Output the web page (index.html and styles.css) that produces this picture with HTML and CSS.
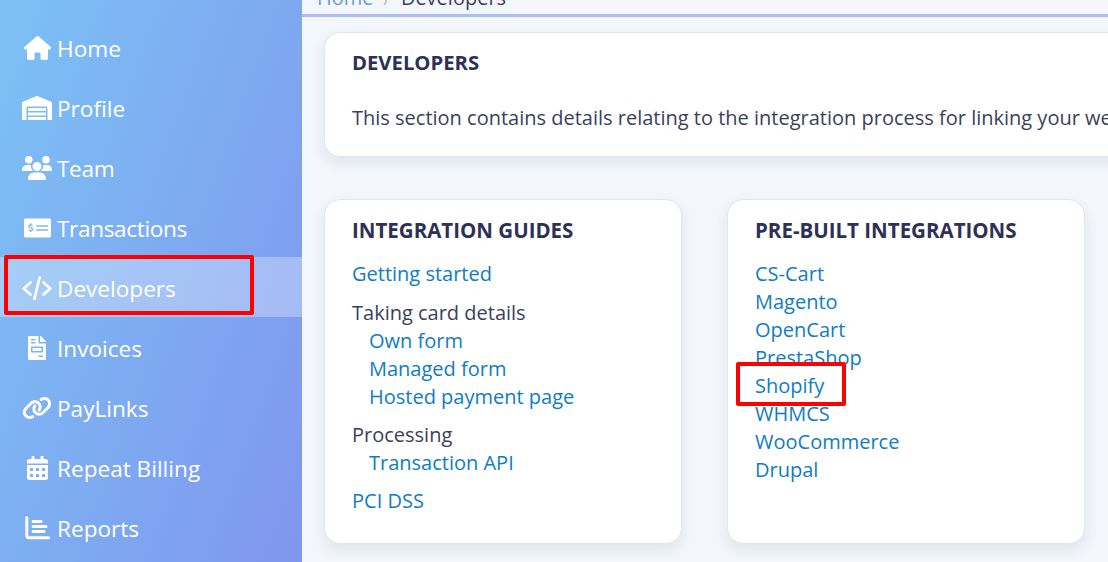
FILE: index.html
```html
<!DOCTYPE html>
<html lang="en">
<head>
<meta charset="utf-8">
<title>Developers</title>
<link rel="stylesheet" href="styles.css">
</head>
<body>
<div class="app">
  <nav class="sidebar">
    <a class="nav-item"><span class="nav-icon"><svg viewBox="0 0 576 512" class="i27"><path d="M575.8 255.5c0 18-15 32.1-32 32.1h-32l.7 160.2c0 2.7-.2 5.4-.5 8.1V472c0 22.1-17.9 40-40 40H456c-1.1 0-2.2 0-3.3-.1c-1.4 .1-2.8 .1-4.2 .1H416 392c-22.1 0-40-17.9-40-40V448 384c0-17.7-14.3-32-32-32H256c-17.7 0-32 14.3-32 32v64 24c0 22.1-17.9 40-40 40H160 128.1c-1.5 0-3-.1-4.5-.2c-1.2 .1-2.4 .2-3.6 .2H104c-22.1 0-40-17.9-40-40V360c0-.9 0-1.9 .1-2.8V287.6H32c-18 0-32-14-32-32.1c0-9 3-17 10-24L266.4 8c7-7 15-8 22-8s15 2 21 7L564.8 231.5c8 7 12 15 11 24z"/></svg></span>Home</a>
    <a class="nav-item"><span class="nav-icon"><svg viewBox="0 0 640 512" class="i30"><path d="M504 352H136.4c-4.4 0-8 3.6-8 8l-.1 48c0 4.4 3.6 8 8 8H504c4.4 0 8-3.6 8-8v-48c0-4.4-3.6-8-8-8zm0 96H136.1c-4.4 0-8 3.6-8 8l-.1 48c0 4.4 3.6 8 8 8h368c4.4 0 8-3.6 8-8v-48c0-4.4-3.6-8-8-8zm0-192H136.6c-4.4 0-8 3.6-8 8l-.1 48c0 4.4 3.6 8 8 8H504c4.4 0 8-3.6 8-8v-48c0-4.4-3.6-8-8-8zm106.5-139L338.4 3.7a48.15 48.15 0 0 0-36.9 0L29.5 117C11.7 124.5 0 141.9 0 161.3V504c0 4.4 3.6 8 8 8h80c4.4 0 8-3.6 8-8V256c0-17.6 14.6-32 32.6-32h382.8c18 0 32.6 14.4 32.6 32v248c0 4.4 3.6 8 8 8h80c4.4 0 8-3.6 8-8V161.3c0-19.4-11.7-36.8-29.5-44.3z"/></svg></span>Profile</a>
    <a class="nav-item tight"><span class="nav-icon"><svg viewBox="0 0 640 512" class="i30"><path d="M144 0a80 80 0 1 1 0 160A80 80 0 1 1 144 0zM512 0a80 80 0 1 1 0 160A80 80 0 1 1 512 0zM0 298.7C0 239.8 47.8 192 106.7 192h42.7c15.9 0 31 3.5 44.6 9.7c-1.3 7.2-1.9 14.7-1.9 22.3c0 38.2 16.8 72.5 43.3 96c-.2 0-.4 0-.7 0H21.3C9.6 320 0 310.4 0 298.7zM405.3 320c-.2 0-.4 0-.7 0c26.6-23.5 43.3-57.8 43.3-96c0-7.6-.7-15-1.9-22.3c13.6-6.3 28.7-9.7 44.6-9.7h42.7C592.2 192 640 239.8 640 298.7c0 11.8-9.6 21.3-21.3 21.3H405.3zM224 224a96 96 0 1 1 192 0 96 96 0 1 1 -192 0zM128 485.3C128 411.7 187.7 352 261.3 352H378.7C452.3 352 512 411.7 512 485.3c0 14.7-11.9 26.7-26.7 26.7H154.7c-14.7 0-26.7-11.9-26.7-26.7z"/></svg></span>Team</a>
    <a class="nav-item tight"><span class="nav-icon"><svg viewBox="0 0 640 512" class="i27"><path d="M608 32H32C14.33 32 0 46.33 0 64v384c0 17.67 14.33 32 32 32h576c17.67 0 32-14.33 32-32V64c0-17.67-14.33-32-32-32zM176 327.88V344c0 4.42-3.58 8-8 8h-16c-4.42 0-8-3.58-8-8v-16.29c-11.29-.58-22.27-4.52-31.37-11.35-3.9-2.93-4.1-8.77-.57-12.14l11.75-11.21c2.77-2.64 6.89-2.76 10.13-.73 3.87 2.42 8.26 3.72 12.82 3.72h28.11c6.5 0 11.8-5.92 11.8-13.19 0-5.95-3.61-11.19-8.77-12.73l-45-13.5c-18.59-5.58-31.58-23.42-31.58-43.39 0-24.52 19.05-44.44 42.67-45.07V152c0-4.42 3.58-8 8-8h16c4.42 0 8 3.58 8 8v16.29c11.29.58 22.27 4.51 31.37 11.35 3.9 2.93 4.1 8.77.57 12.14l-11.75 11.21c-2.77 2.64-6.89 2.76-10.13.73-3.87-2.43-8.26-3.72-12.82-3.72h-28.11c-6.5 0-11.8 5.92-11.8 13.19 0 5.95 3.61 11.19 8.77 12.73l45 13.5c18.59 5.58 31.58 23.42 31.58 43.39 0 24.53-19.05 44.44-42.67 45.07zM576 312c0 4.42-3.58 8-8 8H296c-4.42 0-8-3.58-8-8v-16c0-4.42 3.58-8 8-8h272c4.42 0 8 3.58 8 8v16zm0-96c0 4.42-3.58 8-8 8H296c-4.42 0-8-3.58-8-8v-16c0-4.42 3.58-8 8-8h272c4.42 0 8 3.58 8 8v16z"/></svg></span>Transactions</a>
    <a class="nav-item active"><span class="nav-icon"><svg viewBox="0 0 30 24" class="i30 line"><path d="M8.5 6.5L1.8 12.5L8.5 18.5M21.5 6.5L28.2 12.5L21.5 18.5M17.6 1.5L12.4 23"/></svg></span>Developers</a>
    <a class="nav-item"><span class="nav-icon"><svg viewBox="0 0 384 512" class="i18"><path d="M288 256H96v64h192v-64zm89-151L279.1 7c-4.5-4.5-10.6-7-17-7H256v128h128v-6.1c0-6.3-2.5-12.4-7-16.9zm-153 31V0H24C10.7 0 0 10.7 0 24v464c0 13.3 10.7 24 24 24h336c13.3 0 24-10.7 24-24V160H248c-13.2 0-24-10.8-24-24zM64 72c0-4.42 3.58-8 8-8h80c4.42 0 8 3.58 8 8v16c0 4.42-3.58 8-8 8H72c-4.42 0-8-3.58-8-8V72zm0 64c0-4.42 3.58-8 8-8h80c4.42 0 8 3.58 8 8v16c0 4.42-3.58 8-8 8H72c-4.42 0-8-3.58-8-8v-16zm256 304c0 4.42-3.58 8-8 8h-80c-4.42 0-8-3.58-8-8v-16c0-4.42 3.58-8 8-8h80c4.42 0 8 3.58 8 8v16zm0-200v96c0 8.84-7.16 16-16 16H80c-8.84 0-16-7.16-16-16v-96c0-8.84 7.16-16 16-16h224c8.84 0 16 7.16 16 16z"/></svg></span>Invoices</a>
    <a class="nav-item"><span class="nav-icon"><svg viewBox="0 0 640 512" class="i30"><path d="M579.8 267.7c56.5-56.5 56.5-148 0-204.5c-50-50-128.8-56.5-186.3-15.4l-1.6 1.1c-14.4 10.3-17.7 30.3-7.4 44.6s30.3 17.7 44.6 7.4l1.6-1.1c32.1-22.9 76-19.3 103.8 8.6c31.5 31.5 31.5 82.5 0 114L422.3 334.8c-31.5 31.5-82.5 31.5-114 0c-27.9-27.9-31.5-71.8-8.6-103.8l1.1-1.6c10.3-14.4 6.9-34.4-7.4-44.6s-34.4-6.9-44.6 7.4l-1.1 1.6C206.5 251.2 213 330 263 380c56.5 56.5 148 56.5 204.5 0L579.8 267.7zM60.2 244.3c-56.5 56.5-56.5 148 0 204.5c50 50 128.8 56.5 186.3 15.4l1.6-1.1c14.4-10.3 17.7-30.3 7.4-44.6s-30.3-17.7-44.6-7.4l-1.6 1.1c-32.1 22.9-76 19.3-103.8-8.6C74 372 74 321 105.5 289.5L217.7 177.2c31.5-31.5 82.5-31.5 114 0c27.9 27.9 31.5 71.8 8.6 103.9l-1.1 1.6c-10.3 14.4-6.9 34.4 7.4 44.6s34.4 6.9 44.6-7.4l1.1-1.6C433.5 260.8 427 182 377 132c-56.5-56.5-148-56.5-204.5 0L60.2 244.3z"/></svg></span>PayLinks</a>
    <a class="nav-item"><span class="nav-icon"><svg viewBox="0 0 448 512" class="i21"><path d="M0 464c0 26.5 21.5 48 48 48h352c26.5 0 48-21.5 48-48V192H0v272zm320-196c0-6.6 5.4-12 12-12h40c6.6 0 12 5.4 12 12v40c0 6.6-5.4 12-12 12h-40c-6.6 0-12-5.4-12-12v-40zm0 128c0-6.6 5.4-12 12-12h40c6.6 0 12 5.4 12 12v40c0 6.6-5.4 12-12 12h-40c-6.6 0-12-5.4-12-12v-40zM192 268c0-6.6 5.4-12 12-12h40c6.6 0 12 5.4 12 12v40c0 6.6-5.4 12-12 12h-40c-6.6 0-12-5.4-12-12v-40zm0 128c0-6.6 5.4-12 12-12h40c6.6 0 12 5.4 12 12v40c0 6.6-5.4 12-12 12h-40c-6.6 0-12-5.4-12-12v-40zM64 268c0-6.6 5.4-12 12-12h40c6.6 0 12 5.4 12 12v40c0 6.6-5.4 12-12 12H76c-6.6 0-12-5.4-12-12v-40zm0 128c0-6.6 5.4-12 12-12h40c6.6 0 12 5.4 12 12v40c0 6.6-5.4 12-12 12H76c-6.6 0-12-5.4-12-12v-40zM400 64h-48V16c0-8.8-7.2-16-16-16h-32c-8.8 0-16 7.2-16 16v48H160V16c0-8.8-7.2-16-16-16h-32c-8.8 0-16 7.2-16 16v48H48C21.5 64 0 85.5 0 112v48h448v-48c0-26.5-21.5-48-48-48z"/></svg></span>Repeat Billing</a>
    <a class="nav-item"><span class="nav-icon"><svg viewBox="0 0 25 24" class="i25 line thick"><path d="M1.8 1.5v18a2.2 2.2 0 0 0 2.2 2.2h19.5M8 5.5h8M8 10.5h13M8 15.5h11"/></svg></span>Reports</a>
  </nav>
  <main class="main">
    <div class="crumbs"><a class="crumb-link">Home</a><span class="crumb-sep">/</span><span class="crumb-current">Developers</span></div>
    <div class="content">
      <section class="card intro">
        <h2 class="card-title">DEVELOPERS</h2>
        <p class="intro-text">This section contains details relating to the integration process for linking your website to our payment platform and the tools available</p>
      </section>
      <div class="columns">
        <section class="card">
          <h2 class="card-title">INTEGRATION GUIDES</h2>
          <ul class="links first">
            <li><a>Getting started</a></li>
          </ul>
          <p class="group">Taking card details</p>
          <ul class="links sub">
            <li><a>Own form</a></li>
            <li><a>Managed form</a></li>
            <li><a>Hosted payment page</a></li>
          </ul>
          <p class="group">Processing</p>
          <ul class="links sub">
            <li><a>Transaction API</a></li>
          </ul>
          <ul class="links last">
            <li><a>PCI DSS</a></li>
          </ul>
        </section>
        <section class="card">
          <h2 class="card-title">PRE-BUILT INTEGRATIONS</h2>
          <ul class="links first">
            <li><a>CS-Cart</a></li>
            <li><a>Magento</a></li>
            <li><a>OpenCart</a></li>
            <li><a>PrestaShop</a></li>
            <li><a>Shopify</a></li>
            <li><a>WHMCS</a></li>
            <li><a>WooCommerce</a></li>
            <li><a>Drupal</a></li>
          </ul>
        </section>
      </div>
    </div>
  </main>
</div>
<div class="mark mark-nav"></div>
<div class="mark mark-shopify"></div>
</body>
</html>
```
FILE: styles.css
```css
* { box-sizing: border-box; }
html, body { margin: 0; height: 562px; overflow: hidden; }
body { font-family: "Open Sans", "Noto Sans", sans-serif; color: #3b3f5c; background: #f3f6fb; position: relative; }
.app { display: flex; height: 562px; overflow: hidden; }
.sidebar { width: 302px; flex: none; padding-top: 17px; background: linear-gradient(110deg, #7cc1f5 0%, #8096ee 100%); }
.nav-item { display: flex; align-items: center; height: 60px; padding: 2px 0 0 22px; color: #fff; font-size: 22.6px; }
.nav-item.tight { letter-spacing: -.35px; }
.nav-item.active { background: rgba(255,255,255,.3); }
.nav-icon { width: 35px; flex: none; display: flex; justify-content: center; padding-right: 5px; }
.nav-icon svg { height: 24px; fill: #fff; display: block; }
.i30 { width: 30px; } .i27 { width: 27px; } .i18 { width: 18px; } .i21 { width: 21px; } .i25 { width: 25px; }
.nav-icon svg.line { fill: none; stroke: #fff; stroke-width: 2.7; stroke-linecap: round; stroke-linejoin: round; }
.nav-icon svg.thick { stroke-width: 3; }
.main { flex: 1; min-width: 0; }
.crumbs { height: 17px; padding: 0 0 2px 15px; border-bottom: 3px solid #b1bcf2; display: flex; align-items: flex-end; gap: 10px; font-size: 20px; line-height: 28px; overflow: hidden; }
.crumb-link { color: #6f9bd8; } .crumb-sep { color: #b9bdc9; } .crumb-current { color: #3b3f5c; }
.content { padding: 15px 0 0 22px; width: 806px; }
.card { background: #fff; border: 1px solid #e3e6ea; border-radius: 16px; box-shadow: 0 6px 14px rgba(30,50,90,.09); padding: 16px 27px; }
.intro { width: 900px; height: 125px; padding-top: 15px; white-space: nowrap; }
.card-title { margin: 0; font-size: 20.3px; line-height: 28px; font-weight: 700; color: #2d3057; }
.columns .card-title { font-size: 20.5px; }
.intro-text { margin: 28px 0 0; font-size: 20px; line-height: 28px; }
.columns { display: flex; gap: 45px; margin-top: 42px; }
.columns .card { width: 358px; height: 345px; }
.links { list-style: none; margin: 0; padding: 0; font-size: 20px; line-height: 28px; color: #0f7cc4; }
.links.first { margin-top: 16px; }
.links.sub { padding-left: 17px; }
.links.last { margin-top: 10px; }
.group { margin: 10px 0 0; font-size: 20px; line-height: 28px; }
.links.first + .group { margin-top: 11px; }
.mark { position: absolute; border: 4px solid #f00; border-radius: 2px; }
.mark-nav { left: 4px; top: 255px; width: 250px; height: 60px; }
.mark-shopify { left: 736px; top: 362px; width: 110px; height: 44px; }
```
